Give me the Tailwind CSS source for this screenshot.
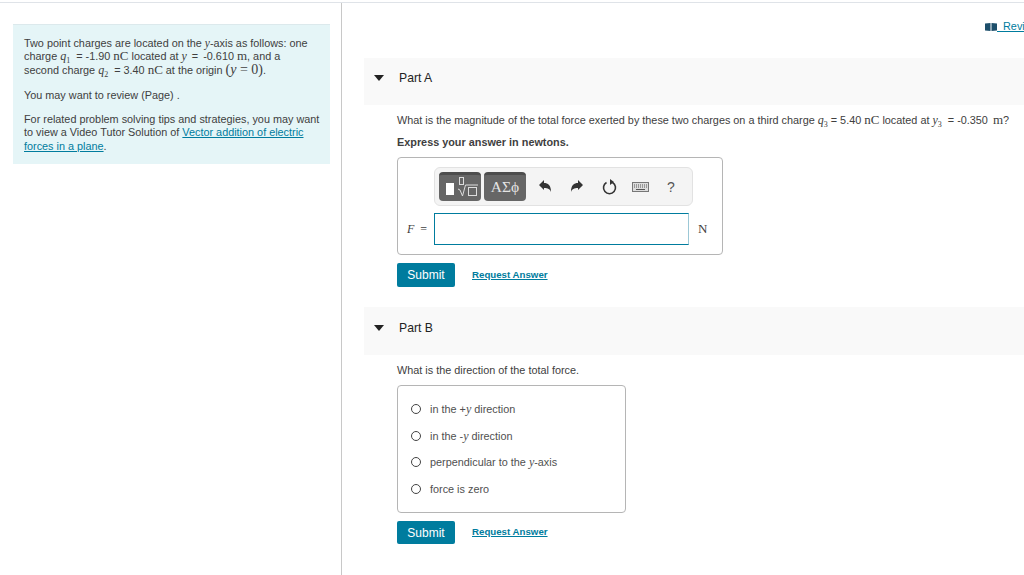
<!DOCTYPE html>
<html lang="en">
<head>
    <meta charset="UTF-8">
    <title>Part A and Part B</title>
    <script src="https://cdn.jsdelivr.net/npm/@tailwindcss/browser@4"></script>
</head>
<body class="bg-white w-[1024px] h-[575px] overflow-hidden font-['Liberation_Sans',Arial,sans-serif] text-[#404040]">
    <div class="h-[1px] mt-[2px] bg-[#dfe3e8]"></div>
    <div class="flex h-[572px]">

        <!-- Left column -->
        <aside class="w-[342px] shrink-0 border-r border-[#c8c8c8] pt-[21px] pl-[13px] pr-[11px]">
            <div class="bg-[#e5f5f7] border-t border-[#dce9ec] h-[140px] pl-[11px] pr-[8px] pt-[12px] text-[10.85px] leading-[13.3px]">
                <p>Two point charges are located on the <i class="font-['Liberation_Serif',serif] text-[11.5px] leading-[0]">y</i>-axis as follows: one<br>charge <i class="font-['Liberation_Serif',serif] text-[12px] leading-[0]">q</i><span class="font-['Liberation_Serif',serif] text-[8px] align-[-3px] leading-[0]">1</span>&nbsp; = -1.90 <span class="font-['Liberation_Serif',serif] text-[13px] leading-[0]">nC</span> located at <i class="font-['Liberation_Serif',serif] text-[12px] leading-[0]">y</i><span class="mx-[2px]"> = </span>-0.610 <span class="font-['Liberation_Serif',serif] text-[13px] leading-[0]">m</span>, and a<br>second charge <i class="font-['Liberation_Serif',serif] text-[12px] leading-[0]">q</i><span class="font-['Liberation_Serif',serif] text-[8px] align-[-3px] leading-[0]">2</span>&nbsp; = 3.40 <span class="font-['Liberation_Serif',serif] text-[13px] leading-[0]">nC</span> at the origin <span class="font-['Liberation_Serif',serif] text-[14px] leading-[0]">(<i>y</i> = 0)</span>.</p>
                <p class="mt-[12px]">You may want to review (Page) .</p>
                <p class="mt-[11px]">For related problem solving tips and strategies, you may want to view a Video Tutor Solution of <a href="#" class="text-[#007c9e] underline">Vector addition of electric forces in a plane</a>.</p>
            </div>
        </aside>

        <!-- Right column -->
        <main class="flex-1 min-w-0 pl-[22px]">
            <div class="h-[55px] flex justify-end items-start pt-[17px] overflow-hidden">
                <a href="#" class="flex items-center w-[39px] shrink-0 text-[10.85px] leading-[13px] text-[#007c9e] underline whitespace-nowrap">
                    <svg width="12" height="8" viewBox="0 0 12 8" class="shrink-0"><path d="M0 .5L5.500 0v8L0 7.500zM6.500 0L12 .5v7L6.500 8z" fill="#1d4f6b"/></svg>
                    <span>&nbsp;&nbsp;Review</span>
                </a>
            </div>

            <!-- Part A -->
            <section>
                <div class="h-[47px] bg-[#f9f9f9] flex items-start pt-[13px]">
                    <svg width="10" height="6" viewBox="0 0 10 6" class="ml-[10px] mt-[4px]"><path d="M0 0h10L5 6z" fill="#222"/></svg>
                    <h2 class="ml-[15px] text-[12.2px] leading-[14px] font-normal text-[#222]">Part A</h2>
                </div>
                <div class="pl-[33px]">
                    <p class="mt-[8px] text-[10.85px] leading-[14px] whitespace-nowrap">What is the magnitude of the total force exerted by these two charges on a third charge <i class="font-['Liberation_Serif',serif] text-[12px] leading-[0]">q</i><span class="font-['Liberation_Serif',serif] text-[8px] align-[-3px] leading-[0]">3</span> = 5.40 <span class="font-['Liberation_Serif',serif] text-[13px] leading-[0]">nC</span> located at <i class="font-['Liberation_Serif',serif] text-[12px] leading-[0]">y</i><span class="font-['Liberation_Serif',serif] text-[8px] align-[-3px] leading-[0] mr-[3px]">3</span> = -0.350 <span class="font-['Liberation_Serif',serif] text-[13px] leading-[0] ml-[2px]">m</span>?</p>
                    <p class="mt-[8px] text-[10.85px] leading-[14px] font-bold">Express your answer in newtons.</p>

                    <div class="mt-[8px] w-[326px] h-[98px] border border-[#b5b5b5] rounded-[4px]">
                        <div class="ml-[36px] mt-[9px] w-[259px] h-[39px] bg-[#f4f4f4] border border-[#e2e2e2] rounded-[6px] flex items-center pl-[4px]">
                            <div class="w-[42px] h-[29px] rounded-[4px] bg-[#666] border-t-[3px] border-[#4d4d4d]">
                                <svg width="42" height="26" viewBox="0 3 42 26" class="block"><rect x="7" y="11" width="8" height="12" fill="#fff"/><rect x="20.500" y="5.500" width="4" height="7" fill="none" stroke="#ddd"/><path d="M19 17l2 1 2.500 6 3-11H39" fill="none" stroke="#ddd"/><rect x="29.500" y="15.500" width="8" height="8" fill="none" stroke="#ddd"/></svg>
                            </div>
                            <div class="ml-[3px] w-[42px] h-[29px] rounded-[4px] bg-[#666] border-t-[3px] border-[#4d4d4d] flex items-center justify-center pb-[3px] text-[#e4e4e4] text-[15.500px] leading-none font-['Liberation_Serif',serif]">ΑΣϕ</div>
                            <svg width="13" height="13" viewBox="0 0 13 13" class="ml-[13px]"><path d="M0 5l5-5v3c4 0 7 2 7 9-1-3-3-4-7-4v2z" fill="#333"/></svg>
                            <svg width="13" height="13" viewBox="0 0 13 13" class="ml-[19px]"><path d="M12 5L7 0v3C3 3 0 5 0 12c1-3 3-4 7-4v2z" fill="#333"/></svg>
                            <svg width="15" height="16" viewBox="0 0 15 16" class="ml-[18px]"><path d="M4.500 3.500A6 6 0 1 0 10.500 3.500" fill="none" stroke="#333" stroke-width="1.600"/><path d="M8 0v6l4-3z" fill="#333"/></svg>
                            <svg width="17" height="10" viewBox="0 0 17 10" class="ml-[15px]"><rect x=".5" y=".5" width="16" height="9" fill="#ddd" stroke="#777"/><path d="M2 3h13M2 5h13" stroke="#555" stroke-dasharray="1 1"/><path d="M4 7.500h9" stroke="#555"/></svg>
                            <span class="ml-[18px] text-[14px] leading-none text-[#555]">?</span>
                        </div>
                        <div class="flex items-center mt-[7px] h-[32px]">
                            <span class="w-[29px] text-right whitespace-nowrap font-['Liberation_Serif',serif] text-[12px]"><i>F</i>&nbsp; =</span>
                            <input type="text" class="ml-[7px] w-[255px] h-[32px] bg-white border border-[#007c9e] border-r-[#9cc8d6] outline-none">
                            <span class="ml-[9px] font-['Liberation_Serif',serif] text-[13px]">N</span>
                        </div>
                    </div>

                    <div class="mt-[8px] flex items-center">
                        <button class="w-[58px] h-[24px] bg-[#007c9e] rounded-[2px] text-white text-[12px]">Submit</button>
                        <a href="#" class="ml-[17px] text-[9.7px] font-bold text-[#007c9e] underline">Request Answer</a>
                    </div>
                </div>
            </section>

            <!-- Part B -->
            <section class="mt-[20px]">
                <div class="h-[48px] bg-[#f9f9f9] flex items-start pt-[14px]">
                    <svg width="10" height="6" viewBox="0 0 10 6" class="ml-[10px] mt-[4px]"><path d="M0 0h10L5 6z" fill="#222"/></svg>
                    <h2 class="ml-[15px] text-[12.2px] leading-[14px] font-normal text-[#222]">Part B</h2>
                </div>
                <div class="pl-[33px]">
                    <p class="mt-[8px] text-[10.85px] leading-[14px]">What is the direction of the total force.</p>
                    <div class="mt-[8px] w-[229px] h-[128px] border border-[#b5b5b5] rounded-[4px] pl-[13px] pt-[10px] text-[10.85px] text-[#505050] flex flex-col">
                        <label class="h-[26.500px] flex items-center gap-[9px]"><span class="w-[10px] h-[10px] rounded-full border border-[#444]"></span><span>in the +<i class="font-['Liberation_Serif',serif] text-[12px] leading-[0]">y</i> direction</span></label>
                        <label class="h-[26.500px] flex items-center gap-[9px]"><span class="w-[10px] h-[10px] rounded-full border border-[#444]"></span><span>in the -<i class="font-['Liberation_Serif',serif] text-[12px] leading-[0]">y</i> direction</span></label>
                        <label class="h-[26.500px] flex items-center gap-[9px]"><span class="w-[10px] h-[10px] rounded-full border border-[#444]"></span><span>perpendicular to the <i class="font-['Liberation_Serif',serif] text-[12px] leading-[0]">y</i>-axis</span></label>
                        <label class="h-[26.500px] flex items-center gap-[9px]"><span class="w-[10px] h-[10px] rounded-full border border-[#444]"></span><span>force is zero</span></label>
                    </div>
                    <div class="mt-[8px] flex items-center">
                        <button class="w-[58px] h-[23px] bg-[#007c9e] rounded-[2px] text-white text-[12px]">Submit</button>
                        <a href="#" class="ml-[17px] text-[9.7px] font-bold text-[#007c9e] underline">Request Answer</a>
                    </div>
                </div>
            </section>
        </main>
    </div>
</body>
</html>
